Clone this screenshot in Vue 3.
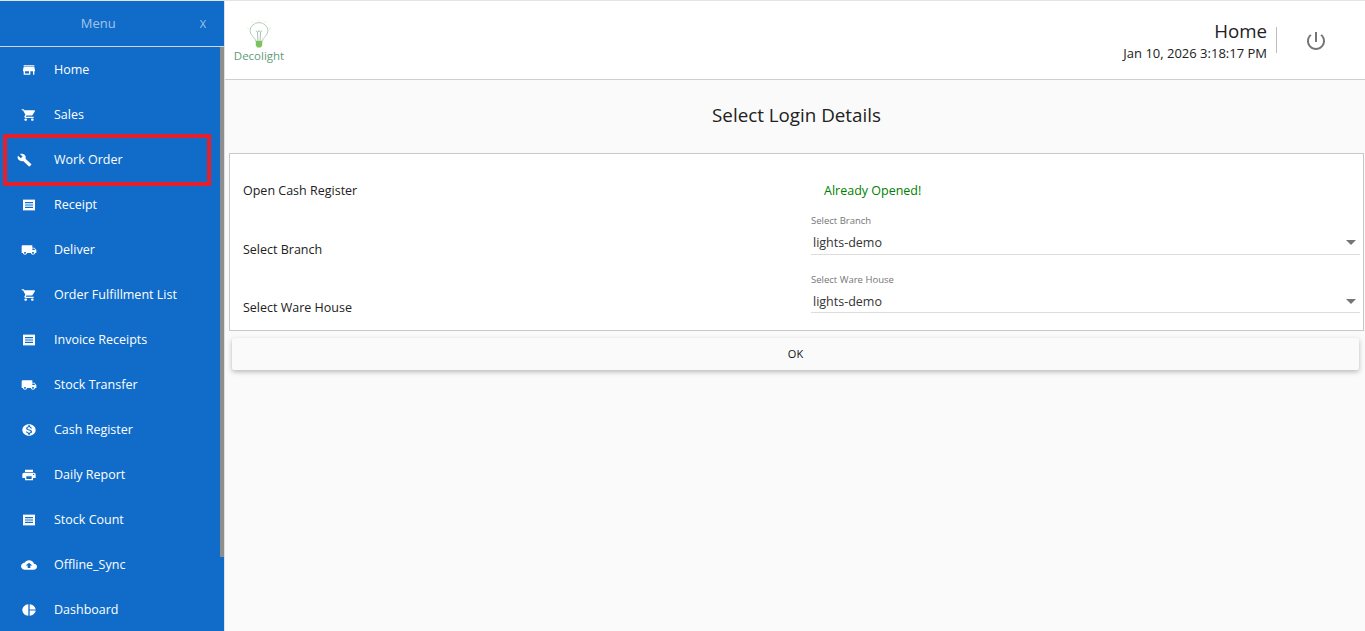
<script setup>
const icons = {
  store: 'M20 4H4v2h16V4zm1 10v-2l-1-5H4l-1 5v2h1v6h10v-6h4v6h2v-6h1zm-9 4H6v-4h6v4z',
  cart: 'M7 18c-1.1 0-1.99.9-1.99 2S5.9 22 7 22s2-.9 2-2-.9-2-2-2zM1 2v2h2l3.6 7.59-1.35 2.45c-.16.28-.25.61-.25.96 0 1.1.9 2 2 2h12v-2H7.42c-.14 0-.25-.11-.25-.25l.03-.12.9-1.63h7.45c.75 0 1.41-.41 1.75-1.03l3.58-6.49c.08-.14.12-.31.12-.48 0-.55-.45-1-1-1H5.21l-.94-2H1zm16 16c-1.1 0-1.99.9-1.99 2s.89 2 1.99 2 2-.9 2-2-.9-2-2-2z',
  build: 'M22.7 19l-9.1-9.1c.9-2.3.4-5-1.5-6.9-2-2-5-2.4-7.4-1.3L9 6 6 9 1.6 4.7C.4 7.1.9 10.1 2.9 12.1c1.9 1.9 4.6 2.4 6.9 1.5l9.1 9.1c.4.4 1 .4 1.4 0l2.3-2.3c.5-.4.5-1.1.1-1.4z',
  receipt: 'M18 17H6v-2h12v2zm0-4H6v-2h12v2zm0-4H6V7h12v2zM3 22l1.5-1.5L6 22l1.5-1.5L9 22l1.5-1.5L12 22l1.5-1.5L15 22l1.5-1.5L18 22l1.5-1.5L21 22V2l-1.5 1.5L18 2l-1.5 1.5L15 2l-1.5 1.5L12 2l-1.5 1.5L9 2 7.5 3.5 6 2 4.5 3.5 3 2v20z',
  truck: 'M20 8h-3V4H3c-1.1 0-2 .9-2 2v11h2c0 1.66 1.34 3 3 3s3-1.34 3-3h6c0 1.66 1.34 3 3 3s3-1.34 3-3h2v-5l-3-4zM6 18.5c-.83 0-1.5-.67-1.5-1.5s.67-1.5 1.5-1.5 1.5.67 1.5 1.5-.67 1.5-1.5 1.5zm13.5-9l1.96 2.5H17V9.5h2.5zm-1.5 9c-.83 0-1.5-.67-1.5-1.5s.67-1.5 1.5-1.5 1.5.67 1.5 1.5-.67 1.5-1.5 1.5z',
  money: 'M12 2C6.48 2 2 6.48 2 12s4.48 10 10 10 10-4.48 10-10S17.52 2 12 2zm1.41 16.09V20h-2.67v-1.93c-1.71-.36-3.16-1.46-3.27-3.4h1.96c.1 1.05.82 1.87 2.65 1.87 1.96 0 2.4-.98 2.4-1.59 0-.83-.44-1.61-2.67-2.14-2.48-.6-4.18-1.62-4.18-3.67 0-1.72 1.39-2.84 3.11-3.21V4h2.67v1.95c1.86.45 2.79 1.86 2.85 3.39H14.3c-.05-1.11-.64-1.87-2.22-1.87-1.5 0-2.4.68-2.4 1.64 0 .84.65 1.39 2.67 1.91s4.18 1.39 4.18 3.91c-.01 1.83-1.38 2.83-3.12 3.16z',
  print: 'M19 8H5c-1.66 0-3 1.34-3 3v6h4v4h12v-4h4v-6c0-1.66-1.34-3-3-3zm-3 11H8v-5h8v5zm3-7c-.55 0-1-.45-1-1s.45-1 1-1 1 .45 1 1-.45 1-1 1zm-1-9H6v4h12V3z',
  cloud: 'M19.35 10.04C18.67 6.59 15.64 4 12 4 9.11 4 6.6 5.64 5.35 8.04 2.34 8.36 0 10.91 0 14c0 3.31 2.69 6 6 6h13c2.76 0 5-2.24 5-5 0-2.64-2.05-4.78-4.65-4.96zM14 13v4h-4v-4H7l5-5 5 5h-3z',
  pie: 'M11 2v20c-5.07-.5-9-4.79-9-10s3.93-9.5 9-10zm2.03 0v8.99H22c-.47-4.74-4.24-8.52-8.97-8.99zm0 11.01V22c4.74-.47 8.5-4.25 8.97-8.99h-8.97z'
}
const menu = [
  ['Home', 'store'], ['Sales', 'cart'], ['Work Order', 'build'], ['Receipt', 'receipt'],
  ['Deliver', 'truck'], ['Order Fulfillment List', 'cart'], ['Invoice Receipts', 'receipt'],
  ['Stock Transfer', 'truck'], ['Cash Register', 'money'], ['Daily Report', 'print'],
  ['Stock Count', 'receipt'], ['Offline_Sync', 'cloud'], ['Dashboard', 'pie']
]
const fields = [
  { label: 'Select Branch', value: 'lights-demo' },
  { label: 'Select Ware House', value: 'lights-demo' }
]
</script>

<template>
  <div class="app">
    <aside class="sidebar">
      <div class="side-head">
        <span class="side-title">Menu</span>
        <span class="side-close">X</span>
      </div>
      <nav class="nav">
        <a v-for="m in menu" :key="m[0]" class="nav-item">
          <svg class="nav-icon" :class="{ wrench: m[1] === 'build' }" viewBox="0 0 24 24" preserveAspectRatio="none"><path :d="icons[m[1]]" fill="#fff" /></svg>
          <span>{{ m[0] }}</span>
        </a>
        <div class="thumb"></div>
        <div class="highlight"></div>
      </nav>
    </aside>
    <div class="main">
      <header class="topbar">
        <div class="logo">
          <svg class="bulb" viewBox="0 0 24 30" width="24" height="30">
            <g stroke="#e6efbc" stroke-width="0.8">
              <path d="M12 0v2M5 1l1 2.2M19 1l-1 2.2M0 8l2 .8M24 8l-2 .8" />
            </g>
            <path d="M8.8 21c-.3-3.4-5.8-5.6-5.8-10a9 8.4 0 0 1 18 0c0 4.4-5.5 6.6-5.8 10z" fill="#fff" stroke="#a8c8b4" stroke-width="0.9" />
            <path d="M9 10.5l1.5 2 1.5-2 1.5 2 1.5-2M10.5 12.5L10.9 20.5M13.5 12.5L13.1 20.5" fill="none" stroke="#8fb09a" stroke-width="0.8" />
            <path d="M8.8 21h6.4v4.5l-1.6 2h-3.2l-1.6-2z" fill="#7ac45c" />
          </svg>
          <span class="logo-text">Decolight</span>
        </div>
        <div class="top-right">
          <div class="page-info">
            <div class="page-name">Home</div>
            <div class="page-date">Jan 10, 2026 3:18:17 PM</div>
          </div>
          <div class="power">
            <svg viewBox="0 0 24 24" width="24" height="24"><path fill="#757575" d="M13 3h-2v10h2V3zm4.83 2.17l-1.42 1.42C17.99 7.86 19 9.81 19 12c0 3.87-3.13 7-7 7s-7-3.13-7-7c0-2.19 1.01-4.14 2.58-5.42L6.17 5.17C4.23 6.82 3 9.26 3 12c0 4.97 4.03 9 9 9s9-4.03 9-9c0-2.74-1.23-5.18-3.17-6.83z" /></svg>
          </div>
        </div>
      </header>
      <main class="content">
        <h1 class="title">Select Login Details</h1>
        <section class="card">
          <div class="row row-first">
            <div class="row-label">Open Cash Register</div>
            <div class="opened">Already Opened!</div>
          </div>
          <div v-for="f in fields" :key="f.label" class="row row-field">
            <div class="row-label">{{ f.label }}</div>
            <div class="field">
              <div class="field-label">{{ f.label }}</div>
              <div class="field-value">
                <span>{{ f.value }}</span>
                <i class="caret"></i>
              </div>
            </div>
          </div>
        </section>
        <button class="ok" type="button">OK</button>
      </main>
    </div>
  </div>
</template>

<style>
html, body { margin: 0; padding: 0; overflow: hidden; }
</style>

<style scoped>
.app {
  display: flex;
  width: 1365px;
  height: 631px;
  box-sizing: border-box;
  border-top: 1px solid #e4e4e4;
  overflow: hidden;
  font-family: "Open Sans", "Noto Sans", sans-serif;
  color: #212121;
}
.sidebar {
  width: 225px;
  flex: none;
  box-sizing: border-box;
  background: #106cc8;
  border-right: 1px solid #e0e0e0;
  display: flex;
  flex-direction: column;
}
.side-head {
  height: 46px;
  flex: none;
  box-sizing: border-box;
  border-bottom: 1px solid #cfd8e0;
  display: flex;
  align-items: center;
  padding: 0 18px 0 0;
}
.side-title {
  flex: 1;
  text-align: center;
  font-size: 13px;
  color: rgba(255, 255, 255, 0.62);
  margin-left: -3px;
  padding-bottom: 1px;
}
.side-close {
  font-size: 11px;
  color: rgba(255, 255, 255, 0.62);
  padding-bottom: 1px;
}
.nav {
  position: relative;
  flex: 1;
  overflow: hidden;
}
.nav-item {
  display: flex;
  align-items: center;
  height: 45px;
  padding-left: 21px;
  color: #fff;
  font-size: 12.5px;
  font-weight: 500;
}
.nav-icon {
  width: 16px;
  height: 14px;
  flex: none;
  margin-right: 17px;
}
.nav-icon.wrench {
  width: 15px;
  margin-left: -4px;
  margin-right: 22px;
}
.thumb {
  position: absolute;
  top: 0;
  right: 0;
  width: 4px;
  height: 510px;
  background: #8e8e8e;
}
.highlight {
  position: absolute;
  left: 3px;
  top: 87px;
  width: 208px;
  height: 52px;
  box-sizing: border-box;
  border: 4px solid #e5202a;
}
.main {
  flex: 1;
  min-width: 0;
  display: flex;
  flex-direction: column;
  background: #fafafa;
}
.topbar {
  height: 79px;
  flex: none;
  box-sizing: border-box;
  background: #fff;
  border-bottom: 1px solid #cfcfcf;
  display: flex;
  align-items: center;
  justify-content: space-between;
}
.logo {
  display: flex;
  flex-direction: column;
  align-items: center;
  width: 52px;
  margin-left: 8px;
  margin-top: 2px;
}
.bulb { display: block; margin-bottom: -1px; }
.logo-text {
  font-size: 11.5px;
  line-height: 13px;
  color: #5f9b7a;
  white-space: nowrap;
}
.top-right {
  display: flex;
  align-items: center;
  margin-right: 37px;
}
.page-info {
  text-align: right;
  padding-right: 9px;
  border-right: 1px solid #bdbdbd;
  height: 26px;
  display: flex;
  flex-direction: column;
  align-items: flex-end;
  justify-content: center;
  margin-right: 27px;
}
.page-name { font-size: 18.7px; line-height: 24px; color: #212121; margin-top: 2px; }
.page-date { font-size: 13px; line-height: 20px; color: #212121; }
.power { display: flex; margin-top: 1px; }
.content {
  flex: 1;
  padding: 0 1px 0 4px;
}
.title {
  margin: 0;
  height: 73px;
  line-height: 70px;
  text-align: center;
  font-size: 18.8px;
  font-weight: 400;
  color: #212121;
}
.card {
  box-sizing: border-box;
  height: 178px;
  background: #fff;
  border: 1px solid #c8c8c8;
  padding: 0 3px 0 13px;
}
.row {
  display: grid;
  grid-template-columns: 568px 1fr;
  font-size: 12.5px;
}
.row-first {
  height: 59px;
  padding-top: 28px;
  box-sizing: border-box;
  line-height: 18px;
}
.row-label { color: #212121; }
.opened { color: #008000; padding-left: 13px; }
.row-field { height: 59px; }
.row-field .row-label { padding-top: 27px; line-height: 18px; }
.row-field:nth-child(2) .row-label { padding-top: 28px; }
.field { display: flex; flex-direction: column; padding-top: 2px; }
.field-label {
  font-size: 9.5px;
  line-height: 12px;
  color: #757575;
}
.field-value {
  display: flex;
  align-items: center;
  justify-content: space-between;
  box-sizing: border-box;
  height: 28px;
  padding: 3px 4px 0 2px;
  border-bottom: 1px solid #dddddd;
  color: #333;
}
.row-field:last-child .field-value { height: 27px; padding-top: 4px; }
.caret {
  width: 0;
  height: 0;
  border-left: 5px solid transparent;
  border-right: 5px solid transparent;
  border-top: 5px solid #757575;
}
.ok {
  display: block;
  box-sizing: border-box;
  width: 1127px;
  height: 32px;
  margin: 7px 0 0 3px;
  padding: 0 0 2px;
  border: 0;
  border-radius: 2px;
  background: #fafafa;
  box-shadow: 0 2px 5px rgba(0, 0, 0, 0.26);
  font-family: inherit;
  font-size: 11px;
  color: #111;
}
</style>
